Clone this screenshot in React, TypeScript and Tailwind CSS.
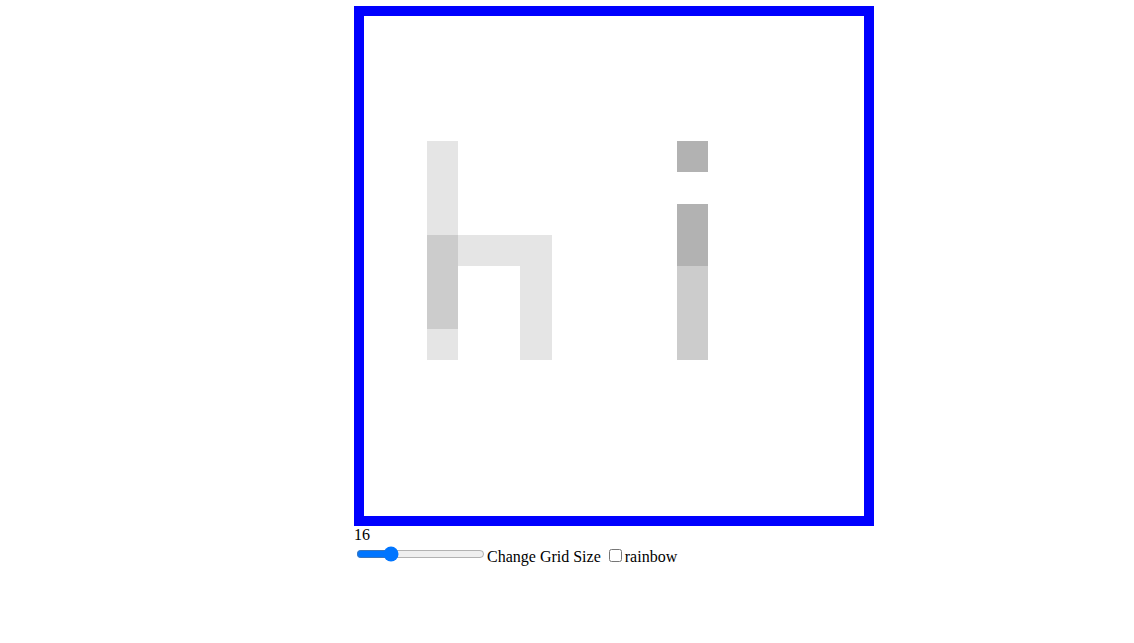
import { useState } from 'react';

const SIZE = 16;

// preset shading: "row,col" -> alpha
const preset: Record<string, number> = {
  '4,2': 0.1, '5,2': 0.1, '6,2': 0.1, '7,2': 0.2, '8,2': 0.2, '9,2': 0.2, '10,2': 0.1,
  '7,3': 0.1, '7,4': 0.1, '7,5': 0.1, '8,5': 0.1, '9,5': 0.1, '10,5': 0.1,
  '4,10': 0.3, '6,10': 0.3, '7,10': 0.3, '8,10': 0.2, '9,10': 0.2, '10,10': 0.2,
};

export default function App() {
  const [size, setSize] = useState(SIZE);
  const [rainbow, setRainbow] = useState(false);
  const [shade, setShade] = useState<Record<string, number>>(preset);

  const paint = (key: string) => {
    setShade((s) => ({ ...s, [key]: Math.min(1, (s[key] || 0) + 0.1) }));
  };

  const cells = [];
  for (let r = 0; r < size; r++) {
    for (let c = 0; c < size; c++) {
      const key = `${r},${c}`;
      const a = shade[key] || 0;
      cells.push(
        <div
          key={key}
          onMouseEnter={() => paint(key)}
          style={{ backgroundColor: a ? (rainbow ? `hsla(${(r * 37 + c * 53) % 360},80%,50%,${a})` : `rgba(0,0,0,${a})`) : 'transparent' }}
        />
      );
    }
  }

  return (
    <div className="min-h-[643px] bg-white pt-[6px] pl-[354px] font-['Liberation_Serif',serif] text-black text-base leading-[normal]">
      <div className="w-[520px] h-[520px] border-[10px] border-[#0000ff]">
        <div
          className="w-full h-full grid"
          style={{ gridTemplateColumns: `repeat(${size}, 1fr)`, gridTemplateRows: `repeat(${size}, 1fr)` }}
        >
          {cells}
        </div>
      </div>
      <div>{size}</div>
      <div>
        <input
          type="range"
          min={1}
          max={64}
          value={size}
          onChange={(e) => {
            setSize(Number(e.target.value));
            setShade({});
          }}
          className="w-[129px] m-[2px]"
        />
        <label>Change Grid Size</label>{' '}
        <input
          type="checkbox"
          checked={rainbow}
          onChange={(e) => setRainbow(e.target.checked)}
          className="mt-[3px] mr-[3px] mb-[3px] ml-[4px]"
        />
        <label>rainbow</label>
      </div>
    </div>
  );
}
